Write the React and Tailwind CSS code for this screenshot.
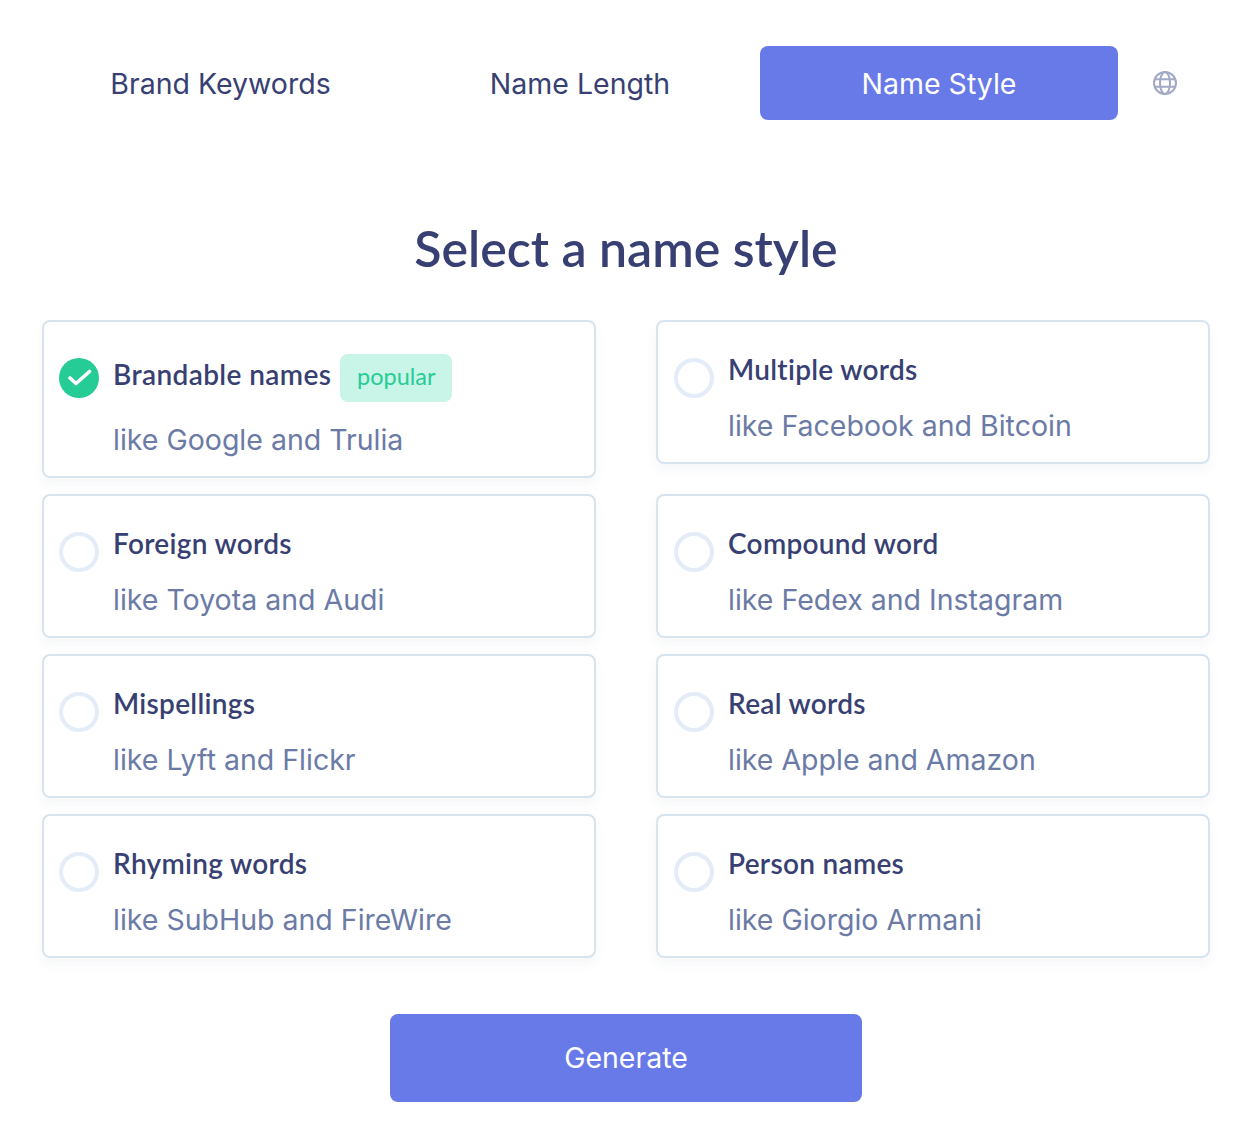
const styles = [
  { title: 'Multiple words', hint: 'like Facebook and Bitcoin', inset: 'pl-[16px]' },
  { title: 'Foreign words', hint: 'like Toyota and Audi', inset: 'pl-[15px]' },
  { title: 'Compound word', hint: 'like Fedex and Instagram', inset: 'pl-[16px]' },
  { title: 'Mispellings', hint: 'like Lyft and Flickr', inset: 'pl-[15px]' },
  { title: 'Real words', hint: 'like Apple and Amazon', inset: 'pl-[16px]' },
  { title: 'Rhyming words', hint: 'like SubHub and FireWire', inset: 'pl-[15px]' },
  { title: 'Person names', hint: 'like Giorgio Armani', inset: 'pl-[16px]' },
];

const titleFont = "font-['Lato','Noto_Sans',sans-serif]";

const StyleCard = ({ title, hint, inset }) => (
  <div className={`flex h-[144px] rounded-[8px] border-2 border-[#d7e3ee] bg-white shadow-[0_6px_12px_rgba(60,80,120,0.05)] ${inset}`}>
    <span className="mt-[36px] h-[40px] w-[40px] shrink-0 rounded-full border-[4px] border-[#e4ecf7]" />
    <div className="ml-[14px]">
      <div className={`mt-[27px] h-[40px] text-[28px] leading-[40px] font-semibold tracking-[0.3px] text-[#383f72] ${titleFont}`}>{title}</div>
      <div className="mt-[17px] text-[28.5px] leading-[40px] text-[#6b7ba6]">{hint}</div>
    </div>
  </div>
);

const App = () => (
  <main className="h-[1144px] w-[1252px] bg-white font-['Inter','Liberation_Sans',sans-serif]">
    <nav className="flex items-center pt-[46px] pl-[41px]">
      <button className="h-[74px] w-[359px] pt-[2px] text-[28.5px] text-[#383f72]">Brand Keywords</button>
      <button className="h-[74px] w-[360px] pt-[2px] text-[28.5px] text-[#383f72]">Name Length</button>
      <button className="h-[74px] w-[358px] rounded-[8px] bg-[#687ae8] pt-[2px] text-[28.5px] text-white">Name Style</button>
      <svg width="26" height="26" viewBox="0 0 26 26" fill="none" stroke="#a3a9c4" strokeWidth="2" className="ml-[34px]">
        <circle cx="13" cy="13" r="11" />
        <ellipse cx="13" cy="13" rx="5" ry="11" />
        <path d="M3 9.2H23M3 16.8H23" />
      </svg>
    </nav>

    <h1 className={`mt-[95px] text-center text-[50px] leading-[66px] font-semibold text-[#383f72] ${titleFont}`}>Select a name style</h1>

    <div className="mt-[39px] grid grid-cols-[554px_554px] items-start gap-x-[60px] gap-y-[16px] px-[42px]">
      <div className="flex h-[158px] rounded-[8px] border-2 border-[#d7e3ee] bg-white pl-[15px] shadow-[0_6px_12px_rgba(60,80,120,0.05)]">
        <span className="mt-[36px] flex h-[40px] w-[40px] shrink-0 items-center justify-center rounded-full bg-[#26cc95]">
          <svg width="24" height="24" viewBox="0 0 24 24" fill="none" stroke="white" strokeWidth="3.6" strokeLinecap="round" strokeLinejoin="round" className="ml-[1px]">
            <path d="M2 12L8 17.5L21.5 5.5" />
          </svg>
        </span>
        <div className="ml-[14px]">
          <div className="mt-[32px] flex h-[48px] items-start">
            <span className={`text-[28px] leading-[40px] font-semibold tracking-[0.4px] text-[#383f72] ${titleFont}`}>Brandable names</span>
            <span className={`ml-[9px] flex h-[48px] w-[112px] items-center justify-center rounded-[8px] bg-[#c9f5e8] pb-[3px] text-[23.5px] text-[#26cc95] ${titleFont}`}>popular</span>
          </div>
          <div className="mt-[18px] text-[28.5px] leading-[40px] text-[#6b7ba6]">like Google and Trulia</div>
        </div>
      </div>
      {styles.map(item => (
        <StyleCard key={item.title} title={item.title} hint={item.hint} inset={item.inset} />
      ))}
    </div>

    <div className="mt-[56px] flex justify-center">
      <button className="h-[88px] w-[472px] rounded-[8px] bg-[#687ae8] text-[28.5px] text-white">Generate</button>
    </div>
  </main>
);

export default App;
